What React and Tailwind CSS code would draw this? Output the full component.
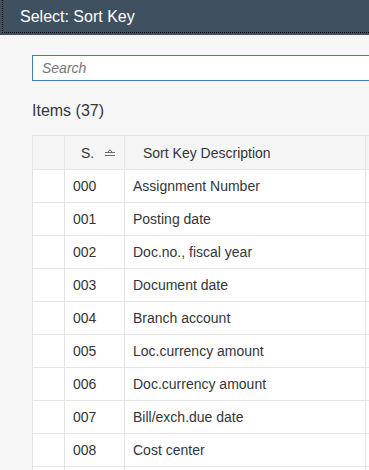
import React from "react";

const rows = [
  ["000", "Assignment Number"],
  ["001", "Posting date"],
  ["002", "Doc.no., fiscal year"],
  ["003", "Document date"],
  ["004", "Branch account"],
  ["005", "Loc.currency amount"],
  ["006", "Doc.currency amount"],
  ["007", "Bill/exch.due date"],
  ["008", "Cost center"],
  ["", ""],
];

function SortIcon() {
  return (
    <svg width="12" height="8" viewBox="0 0 12 8" className="ml-[10px]">
      <path d="M3.5 3.5 L6 0.8 L8.5 3.5" fill="none" stroke="#6a6d70" strokeWidth="1" />
      <path d="M1 3.5 H11 M1 6.5 H11" stroke="#6a6d70" strokeWidth="1" />
    </svg>
  );
}

export default function App() {
  return (
    <div
      className="w-[369px] h-[470px] overflow-hidden bg-[#f7f7f7] text-[#32363a]"
      style={{ fontFamily: '"Liberation Sans", Arial, sans-serif' }}
    >
      <div className="relative h-[35px] bg-[#3f5161] flex items-center pl-5 pb-[2px]">
        <span className="text-[16px] text-white leading-none">Select: Sort Key</span>
        <div className="absolute left-[2px] top-[-4px] right-[-10px] bottom-[2px] border-l border-b border-dotted border-black pointer-events-none" />
      </div>

      <div className="ml-8 mt-5 w-[400px] h-[26px] border border-[#3f7fbf] bg-white flex items-center pl-[9px]">
        <span className="italic text-[14px] text-[#74777a]">Search</span>
      </div>

      <div className="ml-8 mt-[20px] h-[20px] text-[16px] leading-[20px]">Items (37)</div>

      <div className="ml-8 mt-[14px] w-[400px] border-t border-l border-[#e5e5e5] bg-white">
        <div className="flex h-[34px] bg-[#f5f5f5] border-b border-[#e5e5e5] text-[14px]">
          <div className="w-[32px] border-r border-[#e5e5e5]" />
          <div className="w-[60px] border-r border-[#e5e5e5] flex items-center pl-[16px] pt-[1px]">
            <span>S.</span>
            <SortIcon />
          </div>
          <div className="w-[241px] border-r border-[#e5e5e5] flex items-center pl-[18px] pt-[1px]">
            Sort Key Description
          </div>
          <div className="flex-1" />
        </div>
        {rows.map(([k, d], i) => (
          <div key={i} className="flex h-[33px] border-b border-[#e5e5e5] text-[14px]">
            <div className="w-[32px] border-r border-[#e5e5e5]" />
            <div className="w-[60px] border-r border-[#e5e5e5] flex items-center pl-[8px] pt-[1px]">{k}</div>
            <div className="w-[241px] border-r border-[#e5e5e5] flex items-center pl-[8px] pt-[1px]">{d}</div>
            <div className="flex-1" />
          </div>
        ))}
      </div>
    </div>
  );
}
